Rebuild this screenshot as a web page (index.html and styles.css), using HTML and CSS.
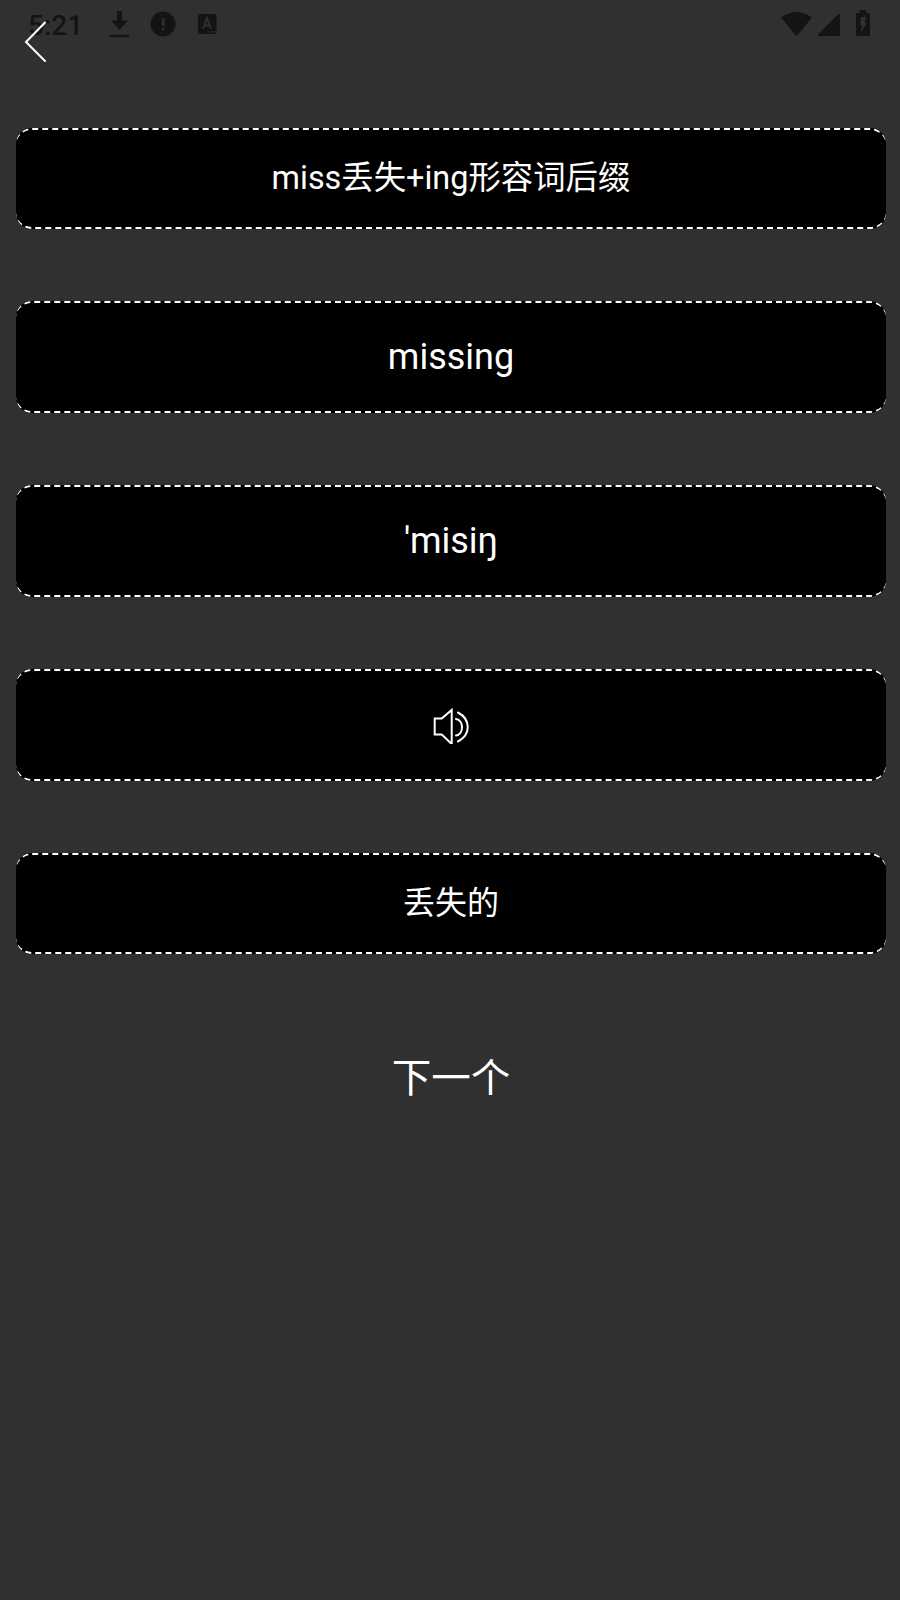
FILE: index.html
```html
<!DOCTYPE html>
<html lang="zh-CN">
<head>
<meta charset="utf-8">
<title>missing</title>
<link rel="stylesheet" href="styles.css">
</head>
<body>
<header class="status">
  <span class="clock">5:21</span>
  <svg class="notes" width="112" height="30" viewBox="108 9 112 30"><path d="M117 11h5v9.500h6l-8.500 9.500-8.500-9.500h6zM109.500 34.700h19.500v2.500h-19.500z"/><circle cx="163" cy="24" r="12.500"/><path class="cut" d="M162 18h2.500v8H162zM162 28h2.500v2.500H162z"/><rect x="198" y="14" width="18.500" height="20" rx="2"/><path class="letter" d="M203 28.500l4-10 4 10M204.500 25.500h5"/><path class="cut" d="M207.500 31h2v1.500h-2zM211 31h2v1.500h-2zM214 31h1.500v1.500H214z"/></svg>
  <svg class="system" width="92" height="30" viewBox="780 9 92 30"><path d="M781 17.500Q796 6.500 812 17.500L797.500 35q-1 1-2 0zM818.500 34l20-20q1.500-1 1.500 1v20q0 1-1 1h-20q-2 0-.5-2zM856 13h3.500v-3h7v3h2q1.500 0 1.500 1.500v20q0 1.500-1.500 1.500h-11q-1.500 0-1.500-1.500z"/><path class="cut" d="M861 17h5l-1.500 6h2.500l-6 9.500 1-7.500h-2z"/></svg>
  <svg class="back" width="24" height="44" viewBox="0 0 24 44"><path d="M22 2.500L3 22l19 19"/></svg>
</header>
<main class="cards">
  <section class="card short formula"><svg class="edge" width="870" height="101"><path stroke-dashoffset="4.1" d="M-1 17A17 16 0 0 1 16 1H854A17 16 0 0 1 871 17"/><path stroke-dashoffset="1.1" d="M-1 84A17 16 0 0 0 16 100H854A17 16 0 0 0 871 84"/></svg><span>miss丢失+ing形容词后缀</span></section>
  <section class="card"><svg class="edge" width="870" height="112"><path stroke-dashoffset="2.1" d="M-1 17A17 16 0 0 1 16 1H854A17 16 0 0 1 871 17"/><path stroke-dashoffset="2.1" d="M-1 95A17 16 0 0 0 16 111H854A17 16 0 0 0 871 95"/></svg><span>missing</span></section>
  <section class="card"><svg class="edge" width="870" height="112"><path stroke-dashoffset="2.1" d="M-1 17A17 16 0 0 1 16 1H854A17 16 0 0 1 871 17"/><path stroke-dashoffset="2.1" d="M-1 95A17 16 0 0 0 16 111H854A17 16 0 0 0 871 95"/></svg><span>'misiŋ</span></section>
  <section class="card"><svg class="edge" width="870" height="112"><path stroke-dashoffset="2.1" d="M-1 17A17 16 0 0 1 16 1H854A17 16 0 0 1 871 17"/><path stroke-dashoffset="2.1" d="M-1 95A17 16 0 0 0 16 111H854A17 16 0 0 0 871 95"/></svg><svg class="sound" width="38" height="38" viewBox="432 706 38 38"><path d="M434.700 718.500h7l10-8.500v34l-10-9.500h-7zM456 719c8 1 8 15.500 0 16.500M458 712.500c13 7 13 22 0 29"/></svg></section>
  <section class="card short"><svg class="edge" width="870" height="101"><path stroke-dashoffset="4.1" d="M-1 17A17 16 0 0 1 16 1H854A17 16 0 0 1 871 17"/><path stroke-dashoffset="1.1" d="M-1 84A17 16 0 0 0 16 100H854A17 16 0 0 0 871 84"/></svg><span>丢失的</span></section>
</main>
<footer class="next">下一个</footer>
</body>
</html>
```
FILE: styles.css
```css
body {
  margin: 0;
  height: 1600px;
  background: #303030;
  color: #fff;
  font-family: Roboto, "Noto Sans CJK SC", sans-serif;
  overflow: hidden;
}
.status {
  position: relative;
  box-sizing: border-box;
  display: flex;
  height: 128px;
  padding: 9px 28px 0;
  fill: #141414;
}
.clock {
  width: 80px;
  color: #141414;
  font-size: 28px;
  line-height: 33px;
  font-weight: 500;
}
.system { margin-left: auto; }
.cut { fill: #303030; }
.letter { fill: none; stroke: #303030; stroke-width: 2; }
.back {
  position: absolute;
  left: 23px;
  top: 20px;
  fill: none;
  stroke: #fff;
  stroke-width: 2;
  stroke-linecap: round;
}
.cards {
  display: flex;
  flex-direction: column;
  gap: 72px;
  padding: 0 14px 0 16px;
}
.card {
  position: relative;
  box-sizing: border-box;
  display: flex;
  align-items: center;
  justify-content: center;
  height: 112px;
  border-radius: 16px;
  background: #000;
  font-size: 36px;
  line-height: 42px;
  overflow: hidden;
}
.short { height: 101px; padding-bottom: 2px; font-size: 32px; line-height: 40px; }
.formula { font-size: 32.4px; }
.edge {
  position: absolute;
  left: 0;
  top: 0;
  fill: none;
  stroke: #fff;
  stroke-width: 2;
  stroke-dasharray: 6.014 4.01;
}
.sound { fill: none; stroke: #fff; stroke-width: 2; stroke-linecap: round; }
.next {
  padding: 97px 0 0 2px;
  text-align: center;
  font-size: 39.5px;
  line-height: 56px;
}
```
